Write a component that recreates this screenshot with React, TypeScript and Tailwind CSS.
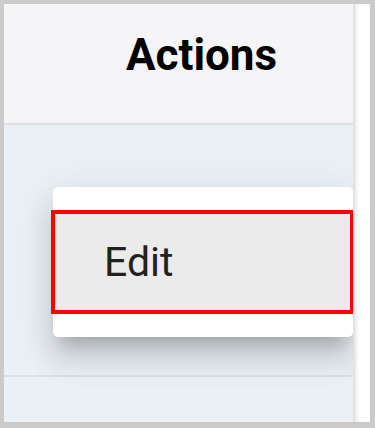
import React from "react";

export default function App() {
  return (
    <div
      className="w-[375px] h-[428px] bg-[#cbcbcb] pl-[4px] pt-[4px] pr-[5px] pb-[6px]"
      style={{ fontFamily: "Roboto, 'Liberation Sans', sans-serif" }}
    >
      <div className="flex h-full">
        {/* table column */}
        <div className="w-[349px] flex flex-col overflow-hidden">
          <div className="h-[119px] bg-[#f5f5f7] pt-[29px] pl-[122px]">
            <span className="text-[44px] leading-none font-bold text-black">Actions</span>
          </div>
          <div className="h-[2px] bg-[#dfe0e2]" />
          <div className="relative h-[250px] bg-[#ebf0f5]">
            {/* popup menu */}
            <div className="absolute left-[49px] top-[62px] w-[300px] rounded-[5px] bg-white py-[23px] shadow-[0_15px_15px_-9px_rgba(0,0,0,0.18),0_23px_29px_3px_rgba(0,0,0,0.1),0_9px_41px_6px_rgba(0,0,0,0.08)]">
              <div className="-ml-[2px] -mr-[1px] h-[104px] border-4 border-[#ff0000] bg-[#ebebeb] flex items-center pl-[49px]">
                <span className="text-[41px] leading-none text-[#212121]">Edit</span>
              </div>
            </div>
          </div>
          <div className="h-[2px] bg-[#dfe0e2]" />
          <div className="flex-1 bg-[#ebf0f5]" />
        </div>
        <div className="w-[2px] bg-[#e2e3e5]" />
        <div className="flex-1 bg-white shadow-[inset_3px_0_4px_-2px_rgba(0,0,0,0.12)]" />
      </div>
    </div>
  );
}
